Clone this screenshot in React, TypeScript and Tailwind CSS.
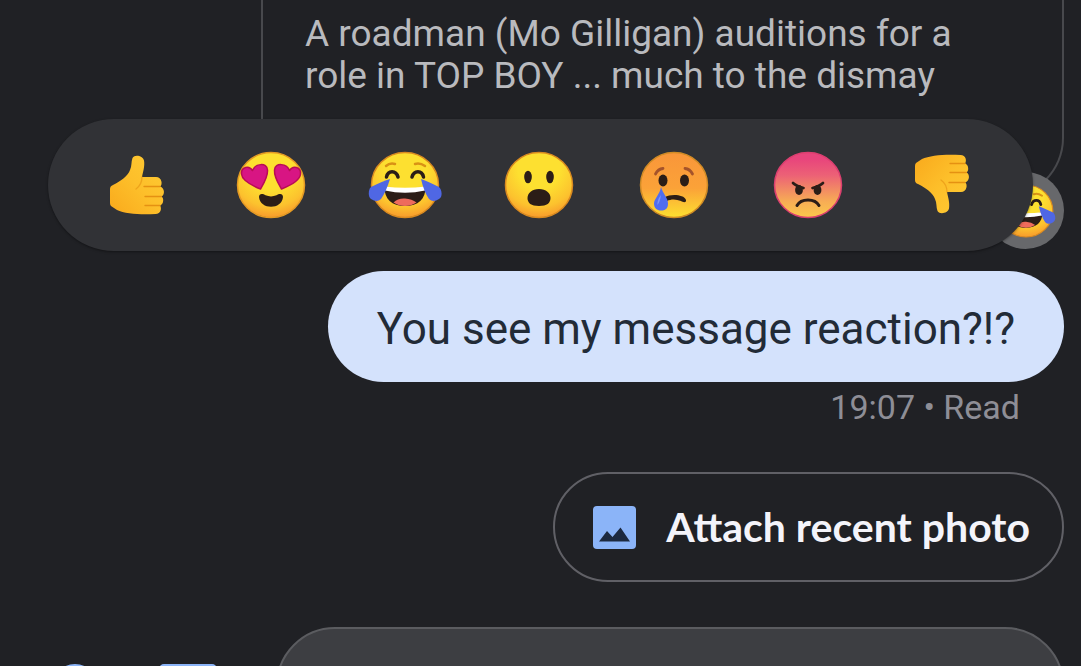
import type { ReactNode } from "react";

const INK = "#2b1d17";

function FaceSvg({ fill, edge, children, className }: { fill: string; edge: string; children: ReactNode; className?: string }) {
  return (
    <svg viewBox="-40 -36 80 72" className={className ?? "h-[72px] w-20"} aria-hidden="true">
      <ellipse rx="33.5" ry="32.5" fill={`url(#${fill})`} stroke={edge} strokeWidth="1.5" />
      {children}
    </svg>
  );
}

function Gradients() {
  return (
    <svg className="absolute size-0" aria-hidden="true">
      <defs>
        <radialGradient id="sunny" cx="0.5" cy="0.25" r="0.78">
          <stop offset="0.4" stopColor="#fde030" />
          <stop offset="0.75" stopColor="#fcc22e" />
          <stop offset="1" stopColor="#f7942b" />
        </radialGradient>
        <linearGradient id="sad" x1="0" x2="0" y1="0" y2="1">
          <stop offset="0" stopColor="#f9963a" />
          <stop offset="0.55" stopColor="#fba238" />
          <stop offset="1" stopColor="#fde030" />
        </linearGradient>
        <linearGradient id="cross" x1="0" x2="0" y1="0" y2="1">
          <stop offset="0.1" stopColor="#e8457c" />
          <stop offset="0.35" stopColor="#ec6176" />
          <stop offset="0.75" stopColor="#f7ac55" />
          <stop offset="1" stopColor="#fbc94b" />
        </linearGradient>
        <linearGradient id="hand" x1="0" x2="1" y1="1" y2="0">
          <stop offset="0" stopColor="#f9a91c" />
          <stop offset="0.5" stopColor="#fdbf2a" />
          <stop offset="1" stopColor="#fecb34" />
        </linearGradient>
      </defs>
    </svg>
  );
}

function Thumb({ down = false }: { down?: boolean }) {
  return (
    <svg viewBox="-40 -36 80 72" className="h-[72px] w-20" aria-hidden="true">
      <g transform={down ? "translate(0 -1) scale(1 -1)" : undefined}>
        <path
          fill="url(#hand)"
          d="M-27 4Q-27 1-24 0C-16-4-9-9-7-15C-5-19-6-23-4.500-27C-2-31 6-29 7-24.500C8-19 6-13 5-8L19-8C25-8 26 0 23 1.500C28 3 28 10 24.500 11.500C27 13 27 19 23 20.500C25 23 24 29 18.500 29C5 30-12 29-20 25L-26 21Q-27 20-27 18Z"
        />
        <g fill="none" stroke="#e59112" strokeWidth="1.300" strokeLinecap="round">
          <path d="M7 1.500H23M8 11.500H24.500M8 20.500H23" />
          <path d="M5-8C5-3 3 1-1 4" opacity=".6" />
        </g>
      </g>
    </svg>
  );
}

function HeartEyes() {
  return (
    <FaceSvg fill="sunny" edge="#e39a24">
      <g fill="#d81583" stroke="#b80d55" strokeWidth="1.500" strokeLinejoin="round">
        <path d="M-10.500 4C-18 1-29-4-29.500-11C-30-18-22-20-18.500-14.500C-16-21.500-4-23-3.500-15C-3-8-7-2-10.500 4Z" />
        <path d="M10.500 4C18 1 29-4 29.500-11C30-18 22-20 18.500-14.500C16-21.500 4-23 3.500-15C3-8 7-2 10.500 4Z" />
      </g>
      <path fill={INK} d="M-12 12C-12 8-8 8.500-5.500 10.300Q0 12.500 5.500 10.300C8 8.500 12 8 12 12C11 25-11 25-12 12Z" />
    </FaceSvg>
  );
}

function Joy({ className }: { className?: string }) {
  return (
    <FaceSvg fill="sunny" edge="#d98a20" className={className}>
      <g fill="none" strokeLinecap="round">
        <path stroke="#d99215" strokeWidth="2.500" d="M-19-19Q-15-22.500-10-21M10-21Q15-22.500 20-19" />
        <path stroke={INK} strokeWidth="3.500" d="M-18.500-8C-17-15-9-15-7-8M7-8C9-15 17-15 18.500-8" />
      </g>
      <path fill={INK} d="M-20.500 1.500Q0 7 20.500 1.500C21 14 13 21 0 21S-21 14-20.500 1.500Z" />
      <path fill="#fff" d="M-20.500 1.500Q0 4 20.500 1.500L20 5.500Q0 10-20 5.500Z" />
      <path fill="#ee6b5c" d="M-11.500 17.500Q-7 13 0 13.500T11.500 17.500Q6 21 0 21T-11.500 17.500Z" />
      <path fill="#4f67e4" d="M-15-6Q-22-4-34 2C-37 5-37 12-34 14Q-28 18-24 14Q-19 7-15-6Z" />
      <path fill="#4f67e4" d="M16-6Q22-4 34 2C37 5 38 12 34 14Q28 18 24 14Q19 7 16-6Z" />
    </FaceSvg>
  );
}

function Wow() {
  return (
    <FaceSvg fill="sunny" edge="#d98a20">
      <g fill={INK}>
        <ellipse cx="-11" cy="-8" rx="3.800" ry="6.300" />
        <ellipse cx="11" cy="-8" rx="3.800" ry="6.300" />
        <path d="M0 4C7 4 11.500 8 11.500 13S8 21 0 21S-11.500 18-11.500 13S-7 4 0 4Z" />
      </g>
    </FaceSvg>
  );
}

function Cry() {
  return (
    <FaceSvg fill="sad" edge="#d08b25">
      <path fill="none" stroke="#a5532a" strokeWidth="2.800" strokeLinecap="round" d="M-18.500-11Q-16-16-11-16.500M11-16.500Q16-16 18.500-11" />
      <g fill={INK}>
        <ellipse cx="-11" cy="-4.500" rx="4.500" ry="6" />
        <ellipse cx="10.500" cy="-4.500" rx="4.500" ry="6" />
        <path d="M-9 12C-4 9 10 9 12 15C12.500 18 9 17.500 7 16C2 14-3 14-7 16Z" />
      </g>
      <path fill="#4f6df0" d="M-13 2C-11 9-6 13-6 18.500S-9 25.500-13 25.500S-20 23-20 18.500S-14 9-13 2Z" />
      <path fill="#7c93f6" d="M-13 10Q-14 17-16.500 20Q-17 15-13 10Z" />
    </FaceSvg>
  );
}

function Angry() {
  return (
    <FaceSvg fill="cross" edge="#dc3f70">
      <g fill="none" stroke={INK} strokeLinecap="round" strokeWidth="2.700">
        <path d="M-15-2Q-12 1-4.500 3M15-2Q12 1 4.500 3" />
        <path strokeWidth="3" d="M-11 20.500C-7 13 7 13 11 20.500" />
      </g>
      <g fill={INK}>
        <ellipse cx="-9" cy="5" rx="3.900" ry="4.900" />
        <ellipse cx="9.500" cy="5" rx="3.900" ry="4.900" />
      </g>
    </FaceSvg>
  );
}

const reactions = [
  { label: "Like", icon: <Thumb /> },
  { label: "Love", icon: <HeartEyes /> },
  { label: "Laugh", icon: <Joy /> },
  { label: "Surprised", icon: <Wow /> },
  { label: "Sad", icon: <Cry /> },
  { label: "Angry", icon: <Angry /> },
  { label: "Dislike", icon: <Thumb down /> },
];

export default function App() {
  return (
    <main className="relative flex h-screen flex-col overflow-hidden bg-[#202125] pr-[17px] font-['Roboto',sans-serif]">
      <Gradients />

      <article className="relative ml-[261px] h-[198px] shrink-0 rounded-b-[60px] border-x-2 border-b-2 border-[#48494d] pt-[13px] pl-[42px]">
        <p className="text-[37px] leading-[42px] whitespace-nowrap text-[#b9babe]">
          A roadman (Mo Gilligan) auditions for a
          <br />
          role in TOP BOY ... much to the dismay
        </p>
        <button aria-label="Laugh reaction" className="absolute top-[172px] -right-0.5 grid size-[77px] place-items-center rounded-full bg-[#67686b]">
          <Joy className="h-[58px] w-16" />
        </button>
      </article>

      <div role="toolbar" aria-label="Reactions" className="absolute inset-x-12 top-[119px] grid h-[132px] grid-cols-7 rounded-full bg-[#313236] pr-6 pl-[22px] shadow-sm shadow-black/30">
        {reactions.map((r) => (
          <button key={r.label} aria-label={r.label} className="grid place-items-center">
            {r.icon}
          </button>
        ))}
      </div>

      <p className="mt-[73px] flex h-[111px] shrink-0 items-center self-end rounded-full bg-[#d4e2fc] px-[49px] pt-1 text-[44px] whitespace-nowrap text-[#222b37]">
        You see my message reaction?!?
      </p>
      <p className="mt-1 shrink-0 self-end pr-11 text-[34px] leading-[42px] text-[#8e8e96]">19:07 • Read</p>

      <button className="mt-11 flex h-[110px] shrink-0 items-center gap-[30px] self-end rounded-full border-2 border-[#606066] pr-8 pl-[38px] font-['Lato',sans-serif] text-[41px] font-bold whitespace-nowrap text-[#f4f4fa]">
        <svg viewBox="0 0 43 43" className="size-[43px]" aria-hidden="true">
          <rect width="43" height="43" rx="4" fill="#8bb4f8" />
          <path d="M6 35.500L14 25L19.500 31L27.500 21.500L37 35.500Z" fill="#1c2940" />
        </svg>
        Attach recent photo
      </button>

      <form className="mt-[45px] flex h-[118px] shrink-0 items-center pl-[53px]">
        <button type="button" aria-label="Add attachment" className="shrink-0">
          <svg viewBox="0 0 44 44" className="size-11" fill="none" stroke="#8bb4f8" strokeWidth="4" aria-hidden="true">
            <circle cx="22" cy="22" r="20" />
            <path d="M22 12V32M12 22H32" />
          </svg>
        </button>
        <button type="button" aria-label="Choose a photo" className="ml-[62px] shrink-0">
          <svg viewBox="0 0 58 44" className="h-11 w-[58px]" fill="none" stroke="#8bb4f8" strokeWidth="4" aria-hidden="true">
            <rect x="2" y="2" width="54" height="40" rx="3" />
            <path d="M12 33L22 22L30 29L38 18L47 33Z" />
          </svg>
        </button>
        <input aria-label="Message" className="ml-[59px] h-full min-w-0 flex-1 rounded-full border-2 border-[#5b5c60] bg-[#3d3e42] px-9 text-[40px] text-[#e8e8ec] outline-none" />
      </form>
    </main>
  );
}
